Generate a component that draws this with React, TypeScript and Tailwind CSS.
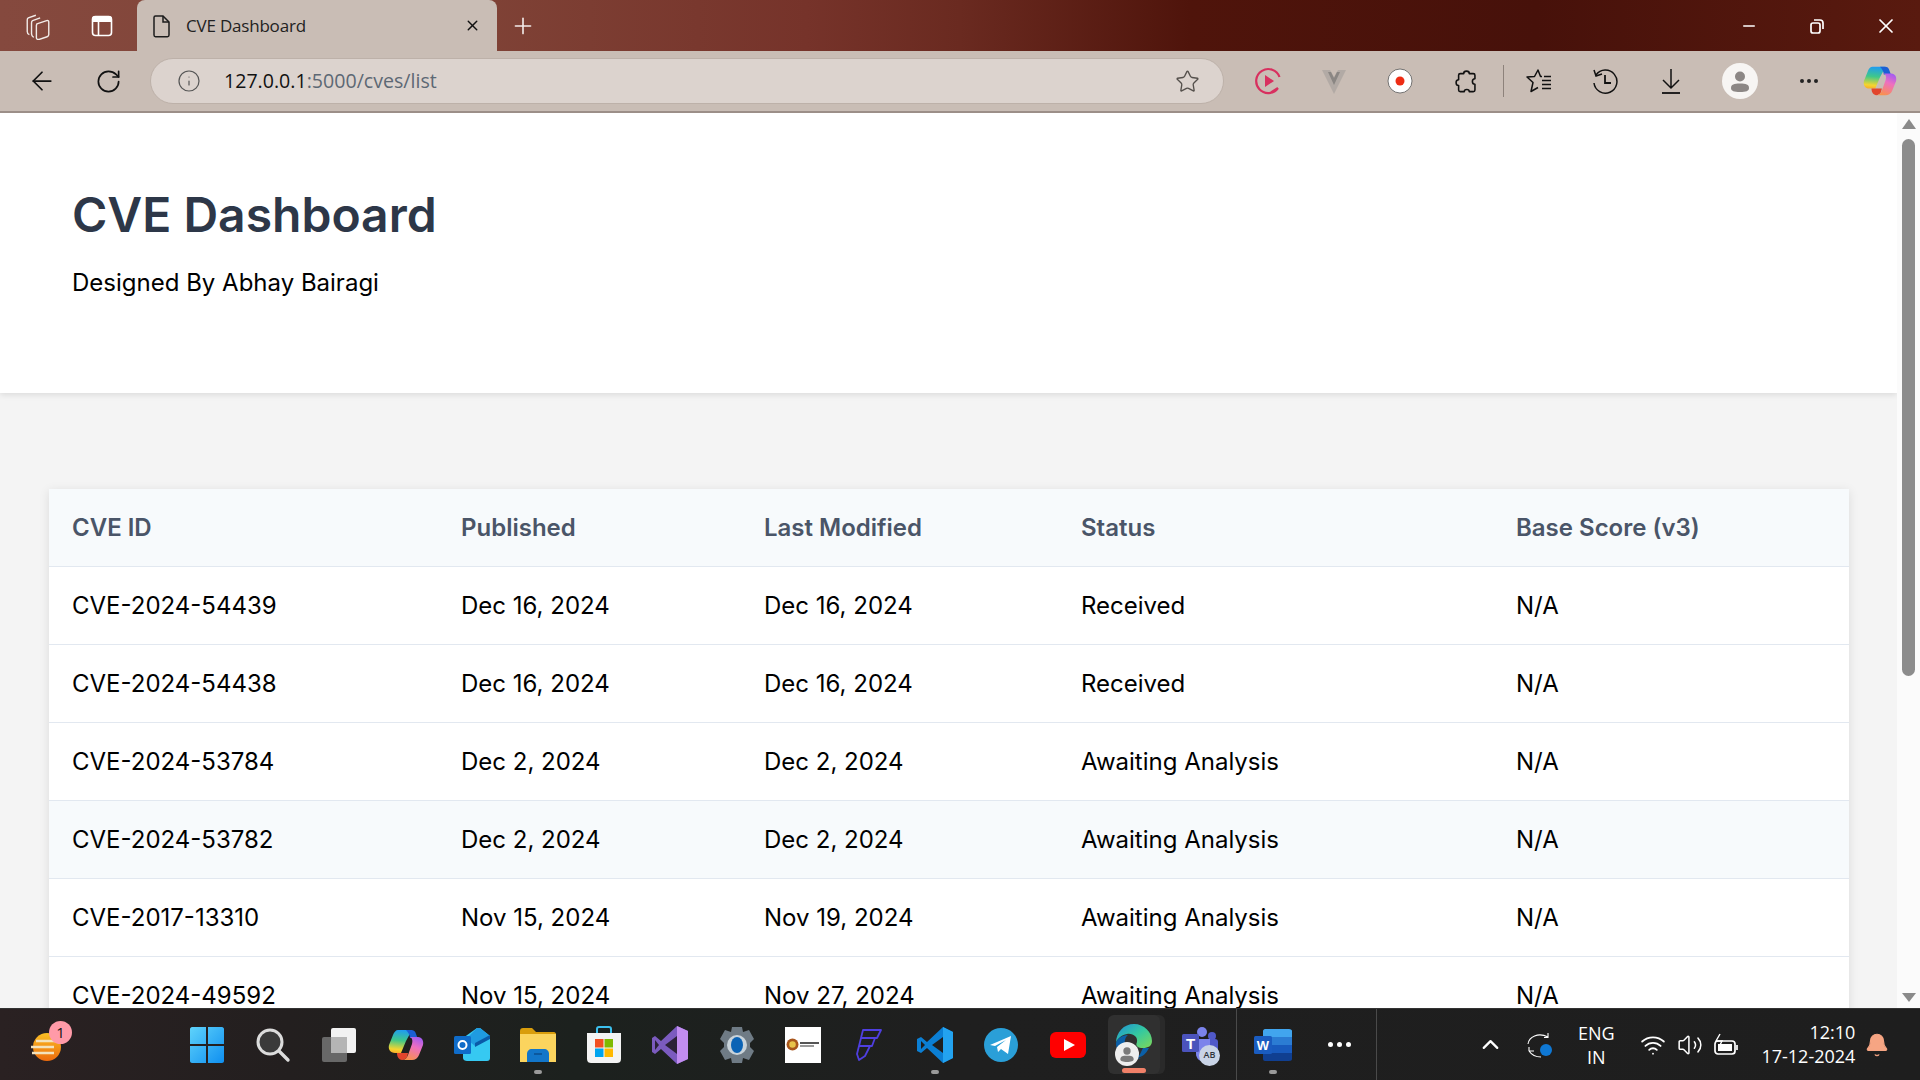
import type { ReactNode } from 'react';
import { ArrowLeft, RotateCw, Info, Star, Download, X, Plus, Minus, ChevronUp, Wifi, Volume2, Bell, MoreHorizontal } from 'lucide-react';

interface CveRow {
  id: string;
  published: string;
  modified: string;
  status: string;
  score: string;
}

const rows: CveRow[] = [
  { id: 'CVE-2024-54439', published: 'Dec 16, 2024', modified: 'Dec 16, 2024', status: 'Received', score: 'N/A' },
  { id: 'CVE-2024-54438', published: 'Dec 16, 2024', modified: 'Dec 16, 2024', status: 'Received', score: 'N/A' },
  { id: 'CVE-2024-53784', published: 'Dec 2, 2024', modified: 'Dec 2, 2024', status: 'Awaiting Analysis', score: 'N/A' },
  { id: 'CVE-2024-53782', published: 'Dec 2, 2024', modified: 'Dec 2, 2024', status: 'Awaiting Analysis', score: 'N/A' },
  { id: 'CVE-2017-13310', published: 'Nov 15, 2024', modified: 'Nov 19, 2024', status: 'Awaiting Analysis', score: 'N/A' },
  { id: 'CVE-2024-49592', published: 'Nov 15, 2024', modified: 'Nov 27, 2024', status: 'Awaiting Analysis', score: 'N/A' },
];

function CopilotLogo({ size, id }: { size: number; id: string }) {
  return (
    <svg width={size} height={size} viewBox="0 0 36 32">
      <defs>
        <linearGradient id={`${id}a`} x1="0.5" y1="0" x2="0.4" y2="1">
          <stop offset="0" stopColor="#1f9cf0" />
          <stop offset="0.45" stopColor="#3fc88a" />
          <stop offset="0.85" stopColor="#f5d52f" />
          <stop offset="1" stopColor="#f8b02a" />
        </linearGradient>
        <linearGradient id={`${id}b`} x1="0.7" y1="0" x2="0.3" y2="1">
          <stop offset="0" stopColor="#a65cf0" />
          <stop offset="0.4" stopColor="#ee6fc0" />
          <stop offset="1" stopColor="#f9924a" />
        </linearGradient>
      </defs>
      <path d="M10 1 H24 L18 12 L13 24 H7 C2 24 0 20 1 16 L5 6 C6 3 8 1 10 1Z" fill={`url(#${id}a)`} />
      <path d="M18 1 H23 C26 1 27 2 28 5 L29.5 9 H22 C22 6 20 3 18 1Z" fill="#1c5fd4" />
      <path d="M13 24 H20 L19 28 C18 30 16 31 14 31 C11 31 9 28 9 24Z" fill="#e2452c" />
      <path d="M22 8 H30 C34 8 36 12 35 16 L31 26 C30 29 27 31 24 31 H14 C17 31 19 29 20 26 L24 15 C25 11 24 9 22 8Z" fill={`url(#${id}b)`} />
    </svg>
  );
}

function TaskSlot({ children, dot, active }: { children: ReactNode; dot?: boolean; active?: boolean }) {
  return (
    <div className="relative flex h-[60px] w-[66.2px] items-center justify-center">
      {active && <span className="absolute left-[11px] top-0 h-[59px] w-[53px] rounded-md bg-[#2a2a2a]" />}
      {active && <span className="absolute left-[7px] top-0 h-[59px] w-[52px] rounded-md bg-[#303030]" />}
      <div className="relative flex items-center justify-center">{children}</div>
      {dot && <span className="absolute bottom-[1px] h-[4px] w-[8px] rounded-full bg-[#9a9a9a]" />}
      {active && <span className="absolute bottom-[2px] h-[5px] w-[24px] rounded-full bg-[#f08068]" />}
    </div>
  );
}

function ToolSlot({ children }: { children: ReactNode }) {
  return <div className="flex w-[66px] shrink-0 items-center justify-center">{children}</div>;
}

function BrowserChrome() {
  return (
    <div className="shrink-0">
      <div className="flex h-[51px] items-stretch bg-[linear-gradient(90deg,#85493e_0%,#7f4236_25%,#76332a_42%,#6a2a20_50%,#4f140b_62%,#47110a_80%,#591a0f_100%)]">
        <div className="flex w-[137px] shrink-0 items-center">
          <div className="flex w-[76px] justify-center">
            <svg width="28" height="28" viewBox="0 0 26 26" fill="none" stroke="#f2ebe8" strokeWidth="1.3">
              <path d="M12 11 L21 8 C22.5 7.6 23 8.5 23 9.5 V21 C23 22 22.5 22.7 21.5 23 L14 25.5 C12.5 25.9 11.5 25 11.5 24 V12.5Z" />
              <path d="M15 5.5 L8 8 C7 8.5 7 9 7 10 V20.5 C7 22 8 23 9 23.5" />
              <path d="M11 3 L4 5.5 C3 6 3 6.5 3 7.5 V18 C3 19.5 3.6 20.5 5 21" />
            </svg>
          </div>
          <div className="flex w-[52px] justify-center">
            <svg width="24" height="24" viewBox="0 0 24 24" fill="none">
              <path d="M2 8 H22 V4.5 C22 3 21 2 19.5 2 H4.5 C3 2 2 3 2 4.5Z" fill="#fff" />
              <rect x="2.5" y="2.5" width="19" height="19" rx="3" stroke="#fff" strokeWidth="1.6" />
              <path d="M8.5 8 V21" stroke="#fff" strokeWidth="1.6" />
            </svg>
          </div>
        </div>
        <div className="flex w-[360px] shrink-0 items-center rounded-t-lg bg-[#c9bdb5] pl-[14px] pr-[16px]">
          <svg width="20" height="24" viewBox="0 0 20 24" fill="none" stroke="#1c1c1c" strokeWidth="1.5">
            <path d="M3 3.5 C3 2.5 3.8 2 4.5 2 H12 L18 8 V21 C18 22 17.2 22.7 16.5 22.7 H4.5 C3.8 22.7 3 22 3 21Z" />
            <path d="M12 2 V8 H18" />
          </svg>
          <span className="ml-[15px] flex-1 font-['Open_Sans',sans-serif] text-[17px] tracking-[-0.2px] text-[#222]">CVE Dashboard</span>
          <X size={17} strokeWidth={2} className="text-[#111]" />
        </div>
        <div className="flex w-[52px] items-center justify-center">
          <Plus size={26} strokeWidth={1.5} className="text-[#f3ecea]" />
        </div>
        <div className="flex flex-1 items-center justify-end">
          <div className="flex w-[66px] justify-center">
            <Minus size={18} strokeWidth={2} className="text-white" />
          </div>
          <div className="flex w-[70px] justify-center">
            <svg width="18" height="18" viewBox="0 0 18 18" fill="none" stroke="#fff" strokeWidth="1.7">
              <rect x="3" y="6" width="9" height="10" rx="2" />
              <path d="M6 3 H12 C14 3 15 4 15 6 V12" />
            </svg>
          </div>
          <div className="flex w-[68px] justify-center">
            <X size={24} strokeWidth={1.7} className="text-white" />
          </div>
        </div>
      </div>
      <div className="flex h-[62px] items-center border-b-[2px] border-[#9c8f88] bg-[#c9bdb5] pl-[9px]">
        <ToolSlot><ArrowLeft size={30} strokeWidth={1.4} className="text-[#111]" /></ToolSlot>
        <ToolSlot><RotateCw size={27} strokeWidth={1.5} className="text-[#111]" /></ToolSlot>
        <div className="ml-[9px] flex h-[46px] w-[1074px] shrink-0 items-center rounded-full border border-[#bdb1a9] bg-[#dcd3ce] pl-[26px] pr-[23px]">
          <Info size={24} strokeWidth={1.2} className="text-[#555]" />
          <span className="ml-[23px] flex-1 font-['Open_Sans',sans-serif] text-[19.6px] text-[#5d6874]">
            <span className="text-[#111]">127.0.0.1</span>:5000/cves/list
          </span>
          <Star size={25} strokeWidth={1.3} className="text-[#55504c]" />
        </div>
        <div className="ml-[11px] flex shrink-0">
          <ToolSlot>
            <svg width="28" height="28" viewBox="0 0 28 28" fill="none">
              <path d="M24 21 A12 12 0 1 1 25.5 10 M24 21 L17 25.5" stroke="#d8305f" strokeWidth="2.2" />
              <path d="M11 8 L20 14 L11 20Z" fill="#d8305f" />
            </svg>
          </ToolSlot>
          <ToolSlot>
            <svg width="26" height="26" viewBox="0 0 26 26">
              <path d="M1 2 H9 L13 9 L17 2 H25 L13 26Z" fill="#b2aaa5" />
              <path d="M7 4 H10 L13 10 L16 4 H19 L13 17Z" fill="#8a8683" />
            </svg>
          </ToolSlot>
          <ToolSlot>
            <svg width="26" height="26" viewBox="0 0 26 26">
              <circle cx="13" cy="13" r="12" fill="#fff" stroke="#555" strokeWidth="0.8" />
              <circle cx="13" cy="13" r="4.5" fill="#ee2c14" />
            </svg>
          </ToolSlot>
          <ToolSlot>
            <svg width="27" height="27" viewBox="0 0 24 24" fill="none" stroke="#111" strokeWidth="1.4" strokeLinejoin="round">
              <path d="M9.5 5 C9.5 2 14.5 2 14.5 5 H18 C19 5 19.5 5.5 19.5 6.5 V9.5 C16.5 9.5 16.5 14.5 19.5 14.5 V19.5 C19.5 20.5 19 21 18 21 H14.5 C14.5 18.5 10 18.5 10 21 H6.5 C5.5 21 5 20.5 5 19.5 V15.5 C2 15.5 2 10.5 5 10.5 V6.5 C5 5.5 5.5 5 6.5 5Z" />
            </svg>
          </ToolSlot>
        </div>
        <div className="ml-[4px] h-[32px] w-px shrink-0 bg-[#8d827b]" />
        <div className="ml-[2px] flex shrink-0">
          <ToolSlot>
            <svg width="28" height="28" viewBox="0 0 28 28" fill="none" stroke="#111" strokeWidth="1.5" strokeLinejoin="round">
              <path d="M17 9.5 H15.5 L13 3 L9.5 9.5 L2 10 L8 15.5 L6 24.5 L13 20.5" />
              <path d="M17 13.5 H26 M17 17.5 H26 M17 21.5 H26 M19 9.5 H26" />
            </svg>
          </ToolSlot>
          <ToolSlot>
            <svg width="28" height="28" viewBox="0 0 28 28" fill="none" stroke="#111" strokeWidth="1.5">
              <path d="M5 8 A11.5 11.5 0 1 1 3 16" />
              <path d="M3 3 L5 9 L11 7" />
              <path d="M14 8 V16 H20" strokeWidth="1.8" />
            </svg>
          </ToolSlot>
          <ToolSlot>
            <svg width="26" height="28" viewBox="0 0 26 28" fill="none" stroke="#111" strokeWidth="1.5">
              <path d="M13 2 V21 M5 13 L13 21 L21 13" />
              <path d="M4 26 H22" strokeWidth="1.8" />
            </svg>
          </ToolSlot>
        </div>
        <div className="ml-[3px] flex shrink-0">
          <ToolSlot>
            <div className="flex h-[36px] w-[36px] items-center justify-center rounded-full bg-[#f7f5f3]">
              <svg width="24" height="24" viewBox="0 0 24 24" fill="#8c8785">
                <circle cx="12" cy="7.5" r="5" />
                <path d="M3 19 C3 15.5 6 14.5 12 14.5 C18 14.5 21 15.5 21 19 C21 22 18 23 12 23 C6 23 3 22 3 19Z" />
              </svg>
            </div>
          </ToolSlot>
        </div>
        <div className="ml-[3px] flex shrink-0">
          <ToolSlot><MoreHorizontal size={24} strokeWidth={2} className="text-[#222]" /></ToolSlot>
        </div>
        <div className="ml-[5px] flex shrink-0">
          <ToolSlot><CopilotLogo size={34} id="bar" /></ToolSlot>
        </div>
      </div>
    </div>
  );
}

function CveTable() {
  return (
    <table className="w-full table-fixed border-collapse bg-white text-left shadow-[0_2px_10px_rgba(0,0,0,0.1)]">
      <colgroup>
        <col className="w-[389px]" />
        <col className="w-[303px]" />
        <col className="w-[317px]" />
        <col className="w-[435px]" />
        <col />
      </colgroup>
      <thead className="bg-[#f7fafc]">
        <tr className="h-[77px] border-b border-[#e2e8f0] text-[24px] text-[#4a5568]">
          <th className="px-[23px] pt-[2px] font-semibold">CVE ID</th>
          <th className="px-[23px] pt-[2px] font-semibold">Published</th>
          <th className="px-[23px] pt-[2px] font-semibold">Last Modified</th>
          <th className="px-[23px] pt-[2px] font-semibold">Status</th>
          <th className="px-[23px] pt-[2px] font-semibold">Base Score (v3)</th>
        </tr>
      </thead>
      <tbody className="text-[24px] text-black">
        {rows.map((row, i) => (
          <tr key={row.id} className={i === 3 ? 'h-[78px] border-b border-[#e2e8f0] bg-[#f7fafc]' : 'h-[78px] border-b border-[#e2e8f0]'}>
            <td className="px-[23px] pt-[2px]">{row.id}</td>
            <td className="px-[23px] pt-[2px]">{row.published}</td>
            <td className="px-[23px] pt-[2px]">{row.modified}</td>
            <td className="px-[23px] pt-[2px]">{row.status}</td>
            <td className="px-[23px] pt-[2px]">{row.score}</td>
          </tr>
        ))}
      </tbody>
    </table>
  );
}

function Taskbar() {
  return (
    <div className="flex h-[72px] shrink-0 items-center border-t border-[#333] bg-[linear-gradient(90deg,#2a2122_0%,#231f1f_15%,#1c211e_30%,#1f1f1f_50%,#1e1e1e_100%)]">
      <div className="relative ml-[28px] flex w-[36px] justify-center">
        <svg width="38" height="38" viewBox="0 0 36 36">
          <defs>
            <linearGradient id="sun" x1="0" y1="0" x2="0" y2="1">
              <stop offset="0" stopColor="#fbbf24" />
              <stop offset="1" stopColor="#ec6a0c" />
            </linearGradient>
          </defs>
          <circle cx="19" cy="20" r="14" fill="url(#sun)" />
          <path d="M8 14 H30 M3 20 H26 M4 26 H26" stroke="#f3e2bc" strokeWidth="2.4" />
        </svg>
        <span className="absolute -right-[8px] -top-[5px] flex h-[23px] w-[23px] items-center justify-center rounded-full bg-[#ff9aa8] font-['Open_Sans',sans-serif] text-[15px] text-[#111]">1</span>
      </div>
      <div className="ml-[110px] flex items-center">
        <TaskSlot>
          <svg width="36" height="36" viewBox="0 0 36 36">
            <defs>
              <linearGradient id="win" x1="0" y1="0" x2="1" y2="1">
                <stop offset="0" stopColor="#5fd3fb" />
                <stop offset="1" stopColor="#0f8ff0" />
              </linearGradient>
            </defs>
            <path d="M1 2 C1 1 2 0 3 0 H17 V17 H1Z M19 0 H33 C34 0 35 1 35 2 V17 H19Z M1 19 H17 V36 H3 C2 36 1 35 1 34Z M19 19 H35 V34 C35 35 34 36 33 36 H19Z" fill="url(#win)" />
          </svg>
        </TaskSlot>
        <TaskSlot>
          <svg width="36" height="36" viewBox="0 0 36 36" fill="none">
            <circle cx="15" cy="15" r="12" fill="#3a3a3a" stroke="#dcdcdc" strokeWidth="3" />
            <path d="M24 24 L33 33" stroke="#dcdcdc" strokeWidth="3.4" strokeLinecap="round" />
          </svg>
        </TaskSlot>
        <TaskSlot>
          <svg width="36" height="36" viewBox="0 0 36 36">
            <rect x="1" y="10" width="25" height="25" rx="2" fill="#686868" />
            <rect x="10" y="1" width="25" height="25" rx="2" fill="#f2f2f2" />
            <rect x="10" y="10" width="16" height="16" fill="#b5b5b5" />
          </svg>
        </TaskSlot>
        <TaskSlot><CopilotLogo size={36} id="task" /></TaskSlot>
        <TaskSlot>
          <svg width="36" height="36" viewBox="0 0 36 36">
            <path d="M9 11 L23 1 H26 L36 9 V31 C36 33 35 34 33 34 H13 C11 34 9 33 9 31Z" fill="#36c9f2" />
            <path d="M15 9 L23 1 H26 L36 9 V11 L21 19 L15 14Z" fill="#1f9be0" />
            <path d="M21 16 L36 8 V12 L21 20Z" fill="#0a5aa8" />
            <rect x="0" y="9" width="17" height="18" rx="1.5" fill="#0f6cc9" />
            <circle cx="8.5" cy="18" r="4" fill="none" stroke="#fff" strokeWidth="2" />
          </svg>
        </TaskSlot>
        <TaskSlot dot>
          <svg width="36" height="34" viewBox="0 0 36 34">
            <path d="M0 3 C0 1 1 0 3 0 H12 L16 4 H34 C35 4 36 5 36 6 V34 H0Z" fill="#d99d0c" />
            <path d="M0 6 H36 V34 H0Z" fill="#fbd45e" />
            <path d="M7 34 V26 C7 23 9 21 12 21 H24 C27 21 29 23 29 26 V34Z" fill="#1276c9" />
            <path d="M14 26 H22" stroke="#0b4f8e" strokeWidth="1.5" />
          </svg>
        </TaskSlot>
        <TaskSlot>
          <svg width="36" height="38" viewBox="0 0 36 38">
            <path d="M11 9 V3 C11 1 12 1 13 1 H23 C24 1 25 1 25 3 V9" fill="none" stroke="#3cc0ee" strokeWidth="2" />
            <path d="M1 7 H35 V33 C35 36 33 37 31 37 H5 C3 37 1 36 1 33Z" fill="#f4f4f4" />
            <rect x="9" y="13" width="8.5" height="8.5" fill="#f25022" />
            <rect x="18.5" y="13" width="8.5" height="8.5" fill="#7fba00" />
            <rect x="9" y="22.5" width="8.5" height="8.5" fill="#00a4ef" />
            <rect x="18.5" y="22.5" width="8.5" height="8.5" fill="#ffb900" />
          </svg>
        </TaskSlot>
        <TaskSlot>
          <svg width="36" height="38" viewBox="0 0 36 38">
            <path d="M25 0 L36 5 V33 L25 38 L9 23 L3 28 L0 26 V12 L3 10 L9 15Z" fill="#7b5bbf" />
            <path d="M25 0 L36 5 V33 L25 38Z" fill="#c28df0" />
            <path d="M25 10 V28 L13 19Z" fill="#2b2138" />
            <path d="M3 14 V24 L7 19Z" fill="#2b2138" />
          </svg>
        </TaskSlot>
        <TaskSlot>
          <svg width="38" height="38" viewBox="0 0 38 38">
            <path d="M14 1 H24 L25 6 L31 4 L36 13 L32 17 V21 L36 25 L31 34 L25 32 L24 37 H14 L13 32 L7 34 L2 25 L6 21 V17 L2 13 L7 4 L13 6Z" fill="#6f7b85" strokeLinejoin="round" />
            <circle cx="19" cy="19" r="10" fill="#c9d3da" />
            <ellipse cx="19" cy="19" rx="6" ry="8" fill="#0b63b5" />
          </svg>
        </TaskSlot>
        <TaskSlot>
          <div className="flex h-[36px] w-[36px] items-center gap-[1px] bg-white px-[1px]">
            <svg width="13" height="13" viewBox="0 0 12 12">
              <circle cx="6" cy="6" r="5.5" fill="#a8561c" />
              <circle cx="6" cy="6" r="3" fill="#e8c34a" />
            </svg>
            <div className="flex flex-col gap-[1px]">
              <div className="h-[2px] w-[19px] bg-[#555]" />
              <div className="h-[2px] w-[14px] bg-[#999]" />
            </div>
          </div>
        </TaskSlot>
        <TaskSlot>
          <svg width="26" height="32" viewBox="0 0 26 32" fill="none" stroke="#4f3fe0" strokeWidth="1.8" strokeLinejoin="round">
            <path d="M7 1 H25 L21 9 H5Z M5 9 H19 L16 17 H3Z M3 17 H14 L9 27 L3 31 L1 25Z" />
          </svg>
        </TaskSlot>
        <TaskSlot dot>
          <svg width="36" height="36" viewBox="0 0 36 36">
            <path d="M26 0 L36 5 V31 L26 36 L10 21 L4 26 L0 24 V12 L4 10 L10 15Z" fill="#0b7fd4" />
            <path d="M26 0 L36 5 V31 L26 36Z" fill="#23a3f0" />
            <path d="M26 10 V26 L15 18Z" fill="#1f1f1f" />
            <path d="M4 14 V22 L8 18Z" fill="#1f1f1f" />
          </svg>
        </TaskSlot>
        <TaskSlot>
          <svg width="34" height="34" viewBox="0 0 34 34">
            <circle cx="17" cy="17" r="17" fill="#2a9fd8" />
            <path d="M6 17 L27 8 L24 26 L17 21 L14 24 L13 19 L22 12 L11 18Z" fill="#fff" />
          </svg>
        </TaskSlot>
        <TaskSlot>
          <svg width="36" height="26" viewBox="0 0 36 26">
            <rect width="36" height="26" rx="6" fill="#ff0000" />
            <path d="M14 7 L25 13 L14 19Z" fill="#fff" />
          </svg>
        </TaskSlot>
        <TaskSlot active>
          <div className="relative -mt-[6px]">
            <svg width="36" height="36" viewBox="0 0 36 36">
              <defs>
                <linearGradient id="edge" x1="0" y1="0" x2="1" y2="1">
                  <stop offset="0" stopColor="#1f8fd8" />
                  <stop offset="0.5" stopColor="#34c9a0" />
                  <stop offset="1" stopColor="#7fd858" />
                </linearGradient>
              </defs>
              <path d="M18 0 C28 0 36 8 36 17 C36 22 32 24 27 24 C22 24 19 22 21 18 C22 13 17 9 11 10 C5 11 1 15 0 19 C0 8 8 0 18 0Z" fill="url(#edge)" />
              <path d="M0 19 C1 15 6 11 12 11 C8 14 7 22 12 29 C15 33 21 36 27 33 C22 36 14 36 8 33 C3 30 0 25 0 19Z" fill="#0b5fa8" />
              <path d="M27 24 H33 C30 30 26 33 21 34 C24 31 25 28 27 24Z" fill="#0b5fa8" />
            </svg>
            <div className="absolute -bottom-[6px] -left-[1px] flex h-[24px] w-[24px] items-center justify-center rounded-full bg-[#eeeeee]">
              <svg width="16" height="16" viewBox="0 0 24 24" fill="#7a7a7a">
                <circle cx="12" cy="7.5" r="5.5" />
                <path d="M2 20 C2 15 6 14.5 12 14.5 C18 14.5 22 15 22 20 C22 23 18 24 12 24 C6 24 2 23 2 20Z" />
              </svg>
            </div>
          </div>
        </TaskSlot>
        <TaskSlot>
          <div className="relative">
            <svg width="36" height="36" viewBox="0 0 36 36">
              <circle cx="20" cy="5" r="5" fill="#7b83eb" />
              <circle cx="30" cy="9" r="4" fill="#5059c9" />
              <rect x="14" y="12" width="22" height="18" rx="3" fill="#5059c9" />
              <path d="M14 12 H28 V24 C28 30 24 34 20 34 C16 34 14 30 14 26Z" fill="#7b83eb" />
              <rect x="0" y="7" width="17" height="18" rx="1.5" fill="#4b53bc" />
            </svg>
            <span className="absolute left-[4px] top-[6px] font-['Liberation_Sans',sans-serif] text-[15px] font-bold text-white">T</span>
            <span className="absolute -bottom-[3px] -right-[2px] flex h-[21px] w-[21px] items-center justify-center rounded-full bg-[#c9d4e6] font-['Open_Sans',sans-serif] text-[9px] font-semibold text-[#30343c]">AB</span>
          </div>
        </TaskSlot>
        <div className="ml-[3px] h-[72px] w-px bg-[#4a4a4a]" />
        <div className="ml-[3px] flex">
          <TaskSlot dot>
            <svg width="38" height="32" viewBox="0 0 38 32">
              <path d="M9 2 C9 1 10 0 11 0 H35 C37 0 38 1 38 2 V8 H9Z" fill="#41a5ee" />
              <rect x="9" y="8" width="29" height="8" fill="#2b7cd3" />
              <rect x="9" y="16" width="29" height="8" fill="#185abd" />
              <path d="M9 24 H38 V30 C38 31 37 32 35 32 H11 C10 32 9 31 9 30Z" fill="#103f91" />
              <rect x="0" y="7" width="18" height="18" rx="1.5" fill="#1a5cc0" />
              <text x="9" y="21" textAnchor="middle" fontSize="13" fontWeight="700" fill="#fff" fontFamily="Liberation Sans">W</text>
            </svg>
          </TaskSlot>
          <TaskSlot>
            <div className="flex gap-[4px]">
              <span className="h-[5px] w-[5px] rounded-full bg-white" />
              <span className="h-[5px] w-[5px] rounded-full bg-white" />
              <span className="h-[5px] w-[5px] rounded-full bg-white" />
            </div>
          </TaskSlot>
        </div>
        <div className="ml-[4px] h-[72px] w-px bg-[#4a4a4a]" />
      </div>
      <div className="flex flex-1 items-center pl-[100px] font-['Open_Sans',sans-serif] text-white">
        <ChevronUp size={27} strokeWidth={2} className="shrink-0" />
        <div className="ml-[22px] shrink-0">
          <svg width="28" height="28" viewBox="0 0 28 28" fill="none" stroke="#fff" strokeWidth="1.1">
            <path d="M2 13 C3 6 12 1 22 6 M22 2 V6.5 H18" />
            <path d="M3 20 H8 M3 20 V16 M3 20 C7 26 12 26 15 26" />
            <circle cx="20" cy="19" r="6" fill="#0f78d4" stroke="none" />
          </svg>
        </div>
        <div className="ml-[17px] w-[50px] shrink-0 text-center text-[18px] leading-[24px]">ENG<br />IN</div>
        <Wifi size={26} strokeWidth={1.7} className="ml-[19px] shrink-0" />
        <Volume2 size={26} strokeWidth={1.4} className="ml-[11px] shrink-0" />
        <div className="ml-[10px] shrink-0">
          <svg width="26" height="24" viewBox="0 0 26 24" fill="none" stroke="#fff" strokeWidth="1.7">
            <rect x="2" y="8" width="20" height="13" rx="3" />
            <rect x="5" y="11" width="14" height="7" fill="#fff" stroke="none" />
            <path d="M24 12 V17" />
            <path d="M7 1 L3 8 H9 L6 14" strokeWidth="1.4" />
          </svg>
        </div>
        <div className="ml-[16px] w-[100px] shrink-0 pb-[2px] text-right text-[18px] leading-[24px]">12:10<br />17-12-2024</div>
        <Bell size={26} fill="#f6a583" strokeWidth={1} className="ml-[9px] shrink-0 text-[#f6a583]" />
      </div>
    </div>
  );
}

export default function App() {
  return (
    <div className="flex h-screen flex-col overflow-hidden bg-white font-['Inter',sans-serif]">
      <BrowserChrome />
      <div className="flex min-h-0 flex-1">
        <main className="min-w-0 flex-1 overflow-hidden bg-[#f4f4f4]">
          <header className="h-[280px] bg-white px-[72px] pt-[73px] shadow-[0_2px_6px_rgba(0,0,0,0.1)]">
            <h1 className="text-[48px] leading-[58px] font-semibold text-[#2d3748]">CVE Dashboard</h1>
            <p className="mt-[23px] text-[24px] leading-[32px] text-black">Designed By Abhay Bairagi</p>
          </header>
          <div className="pl-[49px] pr-[48px] pt-[96px]">
            <CveTable />
          </div>
        </main>
        <div className="flex w-[23px] shrink-0 flex-col items-center bg-[#fbfbfb] pt-[6px]">
          <svg width="14" height="10" viewBox="0 0 14 10"><path d="M7 0 L14 10 H0Z" fill="#8a8a8a" /></svg>
          <div className="mt-[10px] h-[537px] w-[13px] rounded-full bg-[#8c8c8c]" />
          <div className="flex-1" />
          <svg width="14" height="9" viewBox="0 0 14 9" className="mb-[6px]"><path d="M7 9 L14 0 H0Z" fill="#8a8a8a" /></svg>
        </div>
      </div>
      <Taskbar />
    </div>
  );
}
